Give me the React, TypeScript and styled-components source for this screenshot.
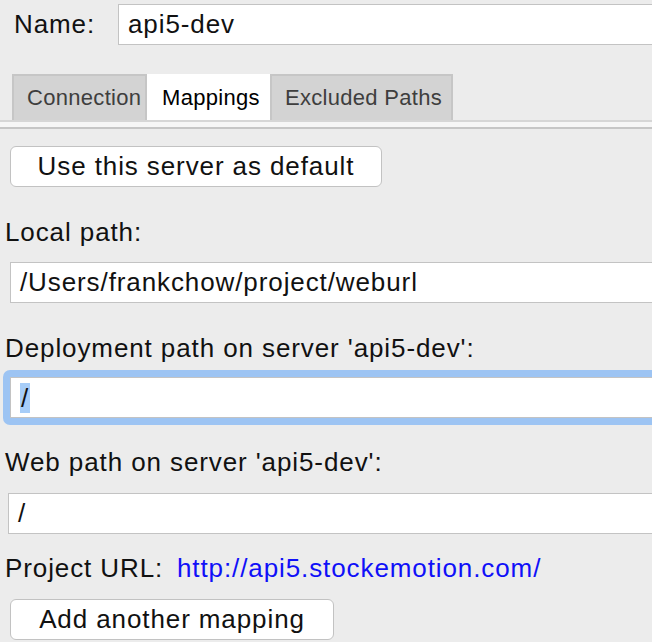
import React from 'react';
import styled, { createGlobalStyle } from 'styled-components';

const GlobalStyle = createGlobalStyle`
  html, body {
    margin: 0;
    padding: 0;
    background: #ececec;
    overflow: hidden;
  }
  #root {
    width: 652px;
    height: 642px;
    overflow: hidden;
  }
`;

const Page = styled.div`
  width: 652px;
  height: 642px;
  overflow: hidden;
  background: #ececec;
  font-family: "Liberation Sans", Arial, sans-serif;
  font-size: 26px;
  letter-spacing: 0.9px;
  color: #111;
`;

const NameRow = styled.div`
  display: flex;
  align-items: center;
  padding: 4px 0 0 14px;
`;

const NameLabel = styled.span`
  width: 104px;
  flex-shrink: 0;
`;

const Field = styled.div<{ $left?: number; $mt?: number }>`
  box-sizing: border-box;
  height: 41px;
  margin-top: ${(p) => p.$mt ?? 0}px;
  margin-left: ${(p) => p.$left ?? 0}px;
  margin-right: -40px;
  flex: 1;
  display: flex;
  align-items: center;
  padding-left: 9px;
  background: #fff;
  border: 1px solid #c3c3c3;
  white-space: nowrap;
`;

const TabBar = styled.div`
  display: flex;
  margin-top: 29px;
  padding-left: 12px;
`;

const Tab = styled.div<{ $active?: boolean; $width: number }>`
  box-sizing: border-box;
  width: ${(p) => p.$width}px;
  height: 46px;
  display: flex;
  align-items: center;
  padding-left: 13px;
  font-size: 22px;
  letter-spacing: 0.3px;
  color: ${(p) => (p.$active ? '#000' : '#3e3e3e')};
  background: ${(p) => (p.$active ? '#fff' : '#d3d3d3')};
  border: 2px solid ${(p) => (p.$active ? '#fff' : '#c6c6c6')};
  border-bottom: none;
`;

const TabRule = styled.div`
  height: 5px;
  background: #f6f6f6;
  border-top: 2px solid #d6d6d6;
  border-bottom: 2px solid #c6c6c6;
`;

const Panel = styled.div`
  display: flex;
  flex-direction: column;
  align-items: flex-start;
`;

const Button = styled.button<{ $mt: number; $width: number }>`
  box-sizing: border-box;
  margin: ${(p) => p.$mt}px 0 0 10px;
  width: ${(p) => p.$width}px;
  height: 41px;
  padding: 0;
  background: #fff;
  border: 1px solid #c2c2c2;
  border-radius: 6px;
  font-family: inherit;
  font-size: 26px;
  letter-spacing: 0.9px;
  color: #111;
`;

const Label = styled.div<{ $mt: number }>`
  margin: ${(p) => p.$mt}px 0 0 5px;
  line-height: 30px;
  white-space: nowrap;
`;

const FieldRow = styled.div`
  display: flex;
  align-self: stretch;
`;

const FocusRing = styled.div`
  display: flex;
  align-self: stretch;
  margin: 7px -40px 0 3px;
  padding: 7px;
  background: #9dc4f3;
  border-radius: 7px;
`;

const Selected = styled.span`
  display: inline-block;
  background: #a7cdf8;
  padding: 0 1px;
  line-height: 30px;
`;

const UrlRow = styled.div`
  display: flex;
  margin: 19px 0 0 5px;
  line-height: 30px;
`;

const UrlLabel = styled.span`
  width: 172px;
`;

const Link = styled.span`
  color: #1010f8;
`;

const App: React.FC = () => {
  return (
    <Page>
      <GlobalStyle />
      <NameRow>
        <NameLabel>Name:</NameLabel>
        <Field>api5-dev</Field>
      </NameRow>
      <TabBar>
        <Tab $width={135}>Connection</Tab>
        <Tab $width={123} $active>Mappings</Tab>
        <Tab $width={183}>Excluded Paths</Tab>
      </TabBar>
      <TabRule />
      <Panel>
        <Button $mt={17} $width={372}>Use this server as default</Button>
        <Label $mt={30}>Local path:</Label>
        <FieldRow>
          <Field $left={10} $mt={15}>/Users/frankchow/project/weburl</Field>
        </FieldRow>
        <Label $mt={30}>Deployment path on server 'api5-dev':</Label>
        <FocusRing>
          <Field $left={0}>
            <Selected>/</Selected>
          </Field>
        </FocusRing>
        <Label $mt={22}>Web path on server 'api5-dev':</Label>
        <FieldRow>
          <Field $left={8} $mt={16}>/</Field>
        </FieldRow>
        <UrlRow>
          <UrlLabel>Project URL:</UrlLabel>
          <Link>http://api5.stockemotion.com/</Link>
        </UrlRow>
        <Button $mt={16} $width={324}>Add another mapping</Button>
      </Panel>
    </Page>
  );
};

export default App;
